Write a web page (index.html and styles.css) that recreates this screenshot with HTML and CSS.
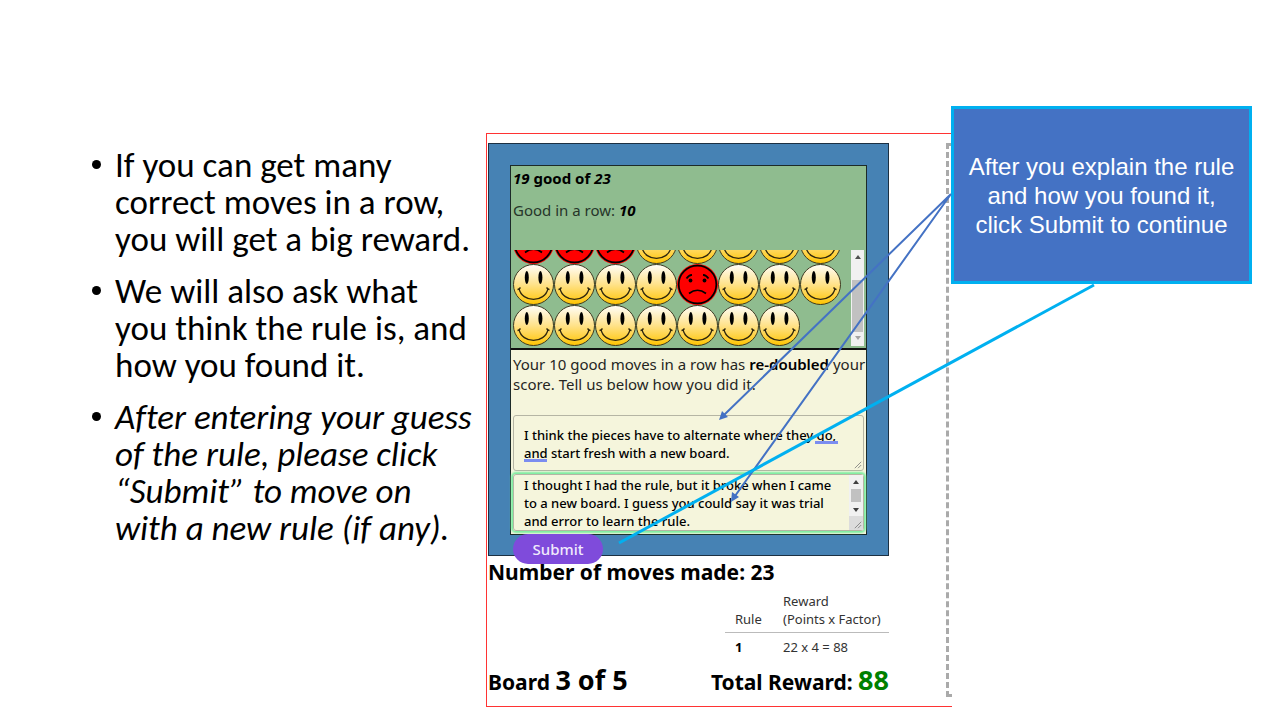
FILE: index.html
```html
<!DOCTYPE html>
<html lang="en">
<head>
<meta charset="utf-8">
<title>Explaining the rule</title>
<link rel="stylesheet" href="styles.css">
</head>
<body>
<svg class="defs" aria-hidden="true">
  <defs>
    <linearGradient id="gold" x1="0" y1="0" x2="0" y2="1">
      <stop offset="0" stop-color="#fffefa"/><stop offset=".5" stop-color="#ffe28a"/><stop offset="1" stop-color="#ffc400"/>
    </linearGradient>
    <symbol id="happy" viewBox="0 0 41 41">
      <circle cx="20.500" cy="20.500" r="20" fill="url(#gold)" stroke="#3d3a22"/>
      <ellipse cx="13.800" cy="13.500" rx="2" ry="6.500"/><ellipse cx="27.400" cy="13.500" rx="2" ry="6.500"/>
      <path d="M6 24.500C9 39 32 39 35 24.500M4.500 25.500Q6 25.500 7.500 23.500M33.500 23.500Q35 25.500 36.500 25.500" fill="none" stroke="#2e260d" stroke-width="1.300"/>
    </symbol>
    <symbol id="sad" viewBox="0 0 41 41">
      <circle cx="20.500" cy="20.500" r="20.500" fill="#f00"/>
      <circle cx="20.500" cy="20.500" r="18.800" fill="none" stroke="#000" stroke-width="1.700"/>
      <circle cx="13.500" cy="16.500" r="1.900"/><circle cx="27.500" cy="16.500" r="1.900"/>
      <path d="M9.500 14.500Q11.500 11 15 10.800M26 10.800Q29.500 11 31.500 14.500M12 29.500Q20.500 23 29 29.500" fill="none" stroke="#000" stroke-width="1.700"/>
    </symbol>
  </defs>
</svg>
<main class="slide">
  <ul class="points">
    <li>If you can get many<br>correct moves in a row,<br>you will get a big reward.</li>
    <li>We will also ask what<br>you think the rule is, and<br>how you found it.</li>
    <li class="emphasis">After entering your guess<br>of the rule, please click<br>“Submit” to move on<br>with a new rule (if any).</li>
  </ul>
  <section class="game">
    <div class="play">
      <div class="board">
        <div class="panel">
          <div class="history">
            <p class="score"><em>19</em> good of <em>23</em></p>
            <p class="streak">Good in a row: <em>10</em></p>
            <div class="track">
              <div class="faces">
                <svg><use href="#sad"/></svg><svg><use href="#sad"/></svg><svg><use href="#sad"/></svg><svg><use href="#happy"/></svg><svg><use href="#happy"/></svg><svg><use href="#happy"/></svg><svg><use href="#happy"/></svg><svg><use href="#happy"/></svg>
                <svg><use href="#happy"/></svg><svg><use href="#happy"/></svg><svg><use href="#happy"/></svg><svg><use href="#happy"/></svg><svg><use href="#sad"/></svg><svg><use href="#happy"/></svg><svg><use href="#happy"/></svg><svg><use href="#happy"/></svg>
                <svg><use href="#happy"/></svg><svg><use href="#happy"/></svg><svg><use href="#happy"/></svg><svg><use href="#happy"/></svg><svg><use href="#happy"/></svg><svg><use href="#happy"/></svg><svg><use href="#happy"/></svg>
              </div>
              <svg class="scrollbar" viewBox="0 0 13 96"><path fill="#f1f1f1" d="M0 0h13v96H0z"/><path fill="#c1c1c1" d="M1 30h11v52H1z"/><path fill="#505050" d="M4 9l3-4 3 4z"/><path fill="#a3a3a3" d="M4 86h6l-3 4z"/></svg>
            </div>
          </div>
          <form class="explain" id="explain">
            <p class="prompt">Your 10 good moves in a row has <strong>re-doubled</strong> your<br>score. Tell us below how you did it.</p>
            <div class="field">
              <textarea class="answer rule" rows="2" aria-label="What the rule is">I think the pieces have to alternate where they go,
and start fresh with a new board.</textarea>
              <span class="mark mark-go"></span><span class="mark mark-and"></span>
              <svg class="grip" viewBox="0 0 10 10"><path d="M1 9l8-8M5 9l4-4" stroke="#777" fill="none"/></svg>
            </div>
            <div class="field">
              <textarea class="answer method" rows="3" aria-label="How you found it">I thought I had the rule, but it broke when I came
to a new board. I guess you could say it was trial
and error to learn the rule.</textarea>
              <svg class="answer-scroll" viewBox="0 0 14 55"><path fill="#f1f1f1" d="M0 0h14v41H0z"/><path fill="#dcdcdc" d="M0 41h14v14H0z"/><path fill="#c1c1c1" d="M2 14h10v13H2z"/><path fill="#404040" d="M4 9l3-4 3 4zM4 33h6l-3 4z"/></svg>
              <svg class="grip" viewBox="0 0 10 10"><path d="M1 9l8-8M5 9l4-4" stroke="#777" fill="none"/></svg>
            </div>
          </form>
        </div>
        <button class="submit" type="submit" form="explain">Submit</button>
      </div>
      <h2 class="moves">Number of moves made: 23</h2>
      <table class="rewards">
        <thead><tr><th scope="col">Rule</th><th scope="col">Reward<br>(Points x Factor)</th></tr></thead>
        <tbody><tr><th scope="row">1</th><td>22 x 4 = 88</td></tr></tbody>
      </table>
      <div class="totals">
        <span>Board <b>3 of 5</b></span>
        <span>Total Reward: <b class="total">88</b></span>
      </div>
    </div>
    <div class="bucket"></div>
  </section>
  <aside class="callout">After you explain the rule<br>and how you found it,<br>click Submit to continue</aside>
  <svg class="arrows" width="1280" height="720" aria-hidden="true">
    <g stroke="#4472c4" stroke-width="2" fill="none"><path d="M951 194L724 415M951 194L735 496"/></g>
    <path fill="#4472c4" d="M719 420L722 411L728 417zM731 502L732 492L739 497z"/>
    <path d="M1094 285L619 543" stroke="#00b0f0" stroke-width="3"/>
  </svg>
</main>
</body>
</html>
```
FILE: styles.css
```css
* { box-sizing: border-box; }
body { margin: 0; background: #fff; color: #000; font-family: "Noto Sans", "Open Sans", sans-serif; }
p, h2, ul { margin: 0; padding: 0; }
.defs { position: absolute; width: 0; height: 0; }
.slide {
  position: relative;
  display: grid;
  grid-template-columns: minmax(0, 1fr) 466px 328px;
  align-items: start;
  min-height: 100vh;
  padding-top: 106px;
  overflow: hidden;
}

.points {
  display: flex;
  flex-direction: column;
  gap: 15px;
  padding: 41px 0 0 115px;
  list-style: none;
  font: 35px/37px Carlito, Lato, sans-serif;
  font-variant-ligatures: none;
  white-space: nowrap;
}
.points li { position: relative; }
.points li::before {
  content: "";
  position: absolute;
  left: -23px;
  top: 13px;
  width: 9px;
  height: 9px;
  border-radius: 50%;
  background: #000;
}
.emphasis { font-style: italic; }

.game {
  display: flex;
  justify-content: space-between;
  margin-top: 27px;
  padding: 9px 0 9px 1px;
  border: solid #f33;
  border-width: 1px 0 1px 1px;
}
.play { width: 401px; }
.board {
  position: relative;
  padding: 21px 21px 20px;
  border: 1px solid #1c3042;
  background: #4682b4;
}
.panel { border: 1px solid #1c2a28; background: #f5f5dc; }
.history {
  padding: 1px 2px 2px;
  border-bottom: 2px solid #111;
  background: #8fbc8f;
}
.score, .streak { font-size: 15px; line-height: 22px; }
.score { font-weight: 700; }
.streak { margin-top: 10px; color: #26352a; }
.streak em { color: #000; font-weight: 700; }
.track {
  display: flex;
  justify-content: space-between;
  height: 96px;
  margin-top: 29px;
}
.faces {
  display: grid;
  grid-template-columns: repeat(8, 41px);
  grid-auto-rows: 41px;
  align-content: end;
  overflow: hidden;
}
.faces svg { width: 41px; height: 41px; }
.scrollbar { width: 13px; height: 96px; }

.explain {
  display: flex;
  flex-direction: column;
  gap: 3px;
  padding: 4px 2px 3px;
}
.prompt {
  margin-bottom: 18px;
  font-size: 15px;
  line-height: 20px;
  color: #26261f;
  white-space: nowrap;
}
.prompt strong { color: #000; font-weight: 600; }
.field { position: relative; }
.answer {
  display: block;
  width: 100%;
  border: 1px solid #b5b5a4;
  border-radius: 3px;
  background: transparent;
  color: #000;
  font: 500 13px/18px "Noto Sans", "Open Sans", sans-serif;
  white-space: pre;
  overflow: hidden;
  resize: none;
  outline: none;
}
.rule { height: 56px; padding: 10px; }
.method {
  height: 57px;
  padding: 1px 10px;
  box-shadow: 0 0 2px 2px #7dedA0;
}
.mark {
  position: absolute;
  height: 3px;
  background: #7b8df0;
}
.mark-go { left: 302px; top: 26px; width: 23px; }
.mark-and { left: 11px; top: 44px; width: 23px; }
.grip { position: absolute; right: 2px; bottom: 2px; width: 8px; height: 8px; }
.answer-scroll { position: absolute; right: 1px; top: 1px; width: 14px; height: 55px; }
.submit {
  position: absolute;
  left: 24px;
  bottom: -9px;
  width: 90px;
  height: 30px;
  padding: 0;
  border: 0;
  border-radius: 15px;
  background: #7f4bdb;
  color: #f1eafc;
  font: 500 15px/30px "Noto Sans", "Open Sans", sans-serif;
}
.moves { margin-top: 2px; font-size: 21px; line-height: 28px; }
.rewards {
  margin: 4px 0 0 auto;
  width: 164px;
  border-collapse: collapse;
  font-size: 13px;
  line-height: 18px;
  color: #333;
  white-space: nowrap;
}
.rewards th, .rewards td {
  padding: 2px 0 4px 10px;
  text-align: left;
  vertical-align: bottom;
  font-weight: 400;
}
.rewards th:first-child { width: 48px; }
.rewards thead th { border-bottom: 1px solid #bbb; }
.rewards tbody th, .rewards tbody td { padding-top: 5px; }
.rewards tbody th { font-weight: 700; color: #000; }
.totals {
  display: flex;
  justify-content: space-between;
  align-items: baseline;
  margin-top: 5px;
  font-size: 21px;
  font-weight: 700;
  line-height: 30px;
}
.totals b { font-size: 27px; font-weight: 700; }
.totals .total { color: #008000; }
.bucket {
  width: 6px;
  border: 3px dashed #aaa;
  border-right: 0;
}

.callout {
  position: relative;
  z-index: 2;
  display: flex;
  align-items: center;
  justify-content: center;
  height: 178px;
  margin: 0 28px 0 -1px;
  border: 3px solid #00b0f0;
  background: #4472c4;
  color: #fff;
  font: 24px/29px "Liberation Sans", Arial, sans-serif;
  text-align: center;
  white-space: nowrap;
}
.arrows { position: absolute; left: 0; top: 0; z-index: 3; pointer-events: none; }
```
